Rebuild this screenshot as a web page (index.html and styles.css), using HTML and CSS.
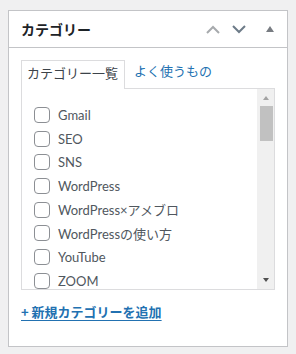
FILE: index.html
```html
<!DOCTYPE html>
<html lang="ja">
<head>
<meta charset="utf-8">
<link rel="stylesheet" href="styles.css">
</head>
<body>
<div class="postbox">
  <div class="postbox-header">
    <h2 class="hndle">カテゴリー</h2>
    <div class="handle-actions">
      <span class="hbtn">
        <svg width="14" height="9" viewBox="0 0 14 9"><polyline points="1,8 7,2 13,8" fill="none" stroke="#a7aaad" stroke-width="2"/></svg>
      </span>
      <span class="hbtn">
        <svg width="14" height="9" viewBox="0 0 14 9"><polyline points="1,1 7,7 13,1" fill="none" stroke="#6d7b88" stroke-width="2"/></svg>
      </span>
      <span class="hbtn hbtn-last">
        <svg width="8" height="6" viewBox="0 0 8 6"><polygon points="0,6 4,0 8,6" fill="#787c82"/></svg>
      </span>
    </div>
  </div>
  <div class="inside">
    <ul class="tabs">
      <li class="tab tab-active">カテゴリー一覧</li>
      <li class="tab"><a href="#">よく使うもの</a></li>
    </ul>
    <div class="panel">
      <ul class="checklist">
        <li class="row"><span class="cb"></span><span class="lbl">Gmail</span></li>
        <li class="row"><span class="cb"></span><span class="lbl">SEO</span></li>
        <li class="row"><span class="cb"></span><span class="lbl">SNS</span></li>
        <li class="row"><span class="cb"></span><span class="lbl">WordPress</span></li>
        <li class="row"><span class="cb"></span><span class="lbl">WordPress×アメブロ</span></li>
        <li class="row"><span class="cb"></span><span class="lbl">WordPressの使い方</span></li>
        <li class="row"><span class="cb"></span><span class="lbl">YouTube</span></li>
        <li class="row"><span class="cb"></span><span class="lbl">ZOOM</span></li>
      </ul>
      <div class="scrollbar">
        <span class="arrow arrow-up"></span>
        <span class="thumb"></span>
        <span class="track"></span>
        <span class="arrow arrow-down"></span>
      </div>
    </div>
    <p class="adder"><a href="#">+ 新規カテゴリーを追加</a></p>
  </div>
</div>
</body>
</html>
```
FILE: styles.css
```css
* { box-sizing: border-box; }
html, body { margin: 0; padding: 0; }
body {
  background: #f0f0f1;
  padding: 10px 8px 0 8px;
  font-family: "Lato", "Noto Sans CJK JP", sans-serif;
  font-size: 13px;
  color: #50575e;
}
.postbox {
  width: 280px;
  height: 337px;
  background: #fff;
  border: 1px solid #c3c4c7;
}
.postbox-header {
  display: flex;
  align-items: center;
  height: 37px;
  border-bottom: 1px solid #c3c4c7;
}
.hndle {
  flex: 1;
  margin: 0;
  padding-left: 12px;
  font-family: "Noto Sans CJK JP", sans-serif;
  font-size: 14px;
  font-weight: 600;
  color: #1d2327;
  line-height: 20px;
}
.handle-actions {
  display: flex;
  align-items: center;
  height: 36px;
}
.hbtn {
  display: flex;
  align-items: center;
  justify-content: center;
  width: 26px;
  height: 36px;
}
.hbtn-last { width: 35px; }
.inside {
  padding: 11px 12px 12px 12px;
}
.tabs {
  list-style: none;
  margin: 0;
  padding: 0;
  display: flex;
  align-items: flex-end;
  font-family: "Noto Sans CJK JP", sans-serif;
}
.tab {
  height: 29px;
  padding: 2px 6px 0 9px;
  line-height: 20px;
}
.tab a { color: #2271b1; text-decoration: none; }
.tab-active {
  padding: 2px 6px 0 5px;
  border: 1px solid #dcdcde;
  border-bottom: none;
  background: #fff;
  color: #3c434a;
  position: relative;
  margin-bottom: -1px;
}
.panel {
  display: flex;
  height: 202px;
  border: 1px solid #dcdcde;
  overflow: hidden;
}
.checklist {
  flex: 1;
  list-style: none;
  margin: 0;
  padding: 14px 0 0 12px;
  overflow: hidden;
}
.row {
  display: flex;
  align-items: center;
  height: 23.7px;
}
.cb {
  width: 16px;
  height: 16px;
  border: 1px solid #8c8f94;
  border-radius: 4px;
  margin-right: 8px;
  flex: none;
}
.lbl { white-space: nowrap; }
.scrollbar {
  width: 17px;
  flex: none;
  background: #f0f0f0;
  display: flex;
  flex-direction: column;
  align-items: center;
}
.arrow {
  width: 0;
  height: 0;
  border-left: 3.5px solid transparent;
  border-right: 3.5px solid transparent;
}
.arrow-up {
  margin-top: 7px;
  border-bottom: 4px solid #a3a3a3;
}
.arrow-down {
  margin-bottom: 7px;
  border-top: 4px solid #505050;
}
.thumb {
  margin-top: 6px;
  width: 13px;
  height: 35px;
  background: #c1c1c1;
  margin-left: 1px;
}
.track { flex: 1; }
.adder {
  margin: 12px 0 0 0;
  line-height: 20px;
  font-family: "Noto Sans CJK JP", sans-serif;
  font-weight: 600;
}
.adder a {
  color: #2271b1;
  text-decoration: underline;
  text-underline-offset: 3px;
}
```
